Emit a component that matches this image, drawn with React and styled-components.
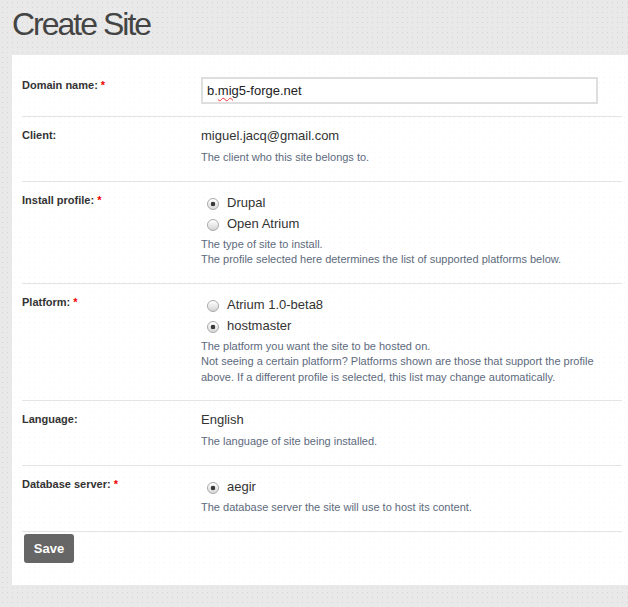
import React from 'react';
import styled, { createGlobalStyle } from 'styled-components';

const GlobalStyle = createGlobalStyle`
    html, body {
        margin: 0;
        padding: 0;
    }
    body {
        background-color: #e9e9e9;
        background-image: radial-gradient(#d6d6d6 0.8px, transparent 1px);
        background-size: 5px 5px;
        font-family: "Liberation Sans", Arial, sans-serif;
        min-height: 607px;
        overflow: hidden;
    }
`

const Page = styled.div`
    padding: 4px 0 22px 12px;
`

const Title = styled.h1`
    margin: 0 0 11px;
    height: 40px;
    font-size: 32px;
    line-height: 40px;
    font-weight: normal;
    letter-spacing: -2px;
    color: #444;
`

const Panel = styled.form`
    background-color: #fff;
    background-image: radial-gradient(#f5f5f5 0.8px, transparent 1px);
    background-size: 5px 5px;
    padding: 12px 6px 22px 10px;
`

const Row = styled.div`
    display: grid;
    grid-template-columns: 179px 1fr;
    padding: 10px 0 ${props => props.$pb || 15}px;
    border-bottom: 1px solid #e4e4e4;
`

const Label = styled.label`
    padding-top: 1px;
    font-size: 11px;
    line-height: 15px;
    font-weight: bold;
    color: #333;
`

const Required = styled.span`
    color: #e00;
    margin-left: 3px;
`

const Value = styled.div`
    font-size: 13px;
    line-height: 18px;
    color: #333;
`

const FakeInput = styled.div`
    box-sizing: border-box;
    width: 397px;
    height: 27px;
    border: 2px solid #dedede;
    padding: 0 4px;
    font-size: 13px;
    line-height: 23px;
    color: #222;
    background: #fff;
`

const Misspelled = styled.span`
    text-decoration: underline wavy #e33;
    text-decoration-thickness: 1px;
    text-underline-offset: 2px;
`

const RadioList = styled.div`
    margin-bottom: -2px;
`

const RadioItem = styled.div`
    display: flex;
    align-items: center;
    gap: 8px;
    height: 21px;
    padding-left: 6px;
    font-size: 13px;
    color: #333;
`

const RadioDot = styled.span`
    box-sizing: border-box;
    width: 12px;
    height: 12px;
    margin-top: 3px;
    border-radius: 50%;
    border: 1px solid #a8a8a8;
    background: ${props => props.$checked
        ? 'radial-gradient(circle, #3a3a3a 0 2px, transparent 2.6px), linear-gradient(#ffffff, #d8d8d8)'
        : 'linear-gradient(#ffffff, #d4d4d4)'};
    box-shadow: inset 0 1px 1px rgba(255, 255, 255, 0.8);
`

const Description = styled.div`
    margin-top: 5px;
    font-size: 11px;
    line-height: 15.5px;
    color: #5d6a7d;
`

const Actions = styled.div`
    padding: 2px 0 0 2px;
`

const SaveButton = styled.button`
    width: 50px;
    height: 29px;
    border: none;
    border-radius: 3px;
    background: #666;
    color: #fff;
    font-family: "Liberation Sans", Arial, sans-serif;
    font-size: 13px;
    font-weight: bold;
    padding: 0;
`

const Radios = ({items}) => (
    <RadioList>
        {items.map(item => (
            <RadioItem key={item.label}>
                <RadioDot $checked={item.checked}/>
                {item.label}
            </RadioItem>
        ))}
    </RadioList>
)

const App = () => {
    return (
        <Page>
            <GlobalStyle/>
            <Title>Create Site</Title>
            <Panel onSubmit={e => e.preventDefault()}>
                <Row $pb={12}>
                    <Label>Domain name:<Required>*</Required></Label>
                    <FakeInput>b.<Misspelled>mig</Misspelled>5-forge.net</FakeInput>
                </Row>
                <Row>
                    <Label>Client:</Label>
                    <div>
                        <Value>miguel.jacq@gmail.com</Value>
                        <Description>The client who this site belongs to.</Description>
                    </div>
                </Row>
                <Row>
                    <Label>Install profile:<Required>*</Required></Label>
                    <div>
                        <Radios items={[
                            {label: 'Drupal', checked: true},
                            {label: 'Open Atrium'},
                        ]}/>
                        <Description>
                            The type of site to install.<br/>
                            The profile selected here determines the list of supported platforms below.
                        </Description>
                    </div>
                </Row>
                <Row>
                    <Label>Platform:<Required>*</Required></Label>
                    <div>
                        <Radios items={[
                            {label: 'Atrium 1.0-beta8'},
                            {label: 'hostmaster', checked: true},
                        ]}/>
                        <Description>
                            The platform you want the site to be hosted on.<br/>
                            Not seeing a certain platform? Platforms shown are those that support the profile above. If a different profile is selected, this list may change automatically.
                        </Description>
                    </div>
                </Row>
                <Row>
                    <Label>Language:</Label>
                    <div>
                        <Value>English</Value>
                        <Description>The language of site being installed.</Description>
                    </div>
                </Row>
                <Row $pb={16}>
                    <Label>Database server:<Required>*</Required></Label>
                    <div>
                        <Radios items={[
                            {label: 'aegir', checked: true},
                        ]}/>
                        <Description>The database server the site will use to host its content.</Description>
                    </div>
                </Row>
                <Actions>
                    <SaveButton type="submit">Save</SaveButton>
                </Actions>
            </Panel>
        </Page>
    )
}

export default App;
